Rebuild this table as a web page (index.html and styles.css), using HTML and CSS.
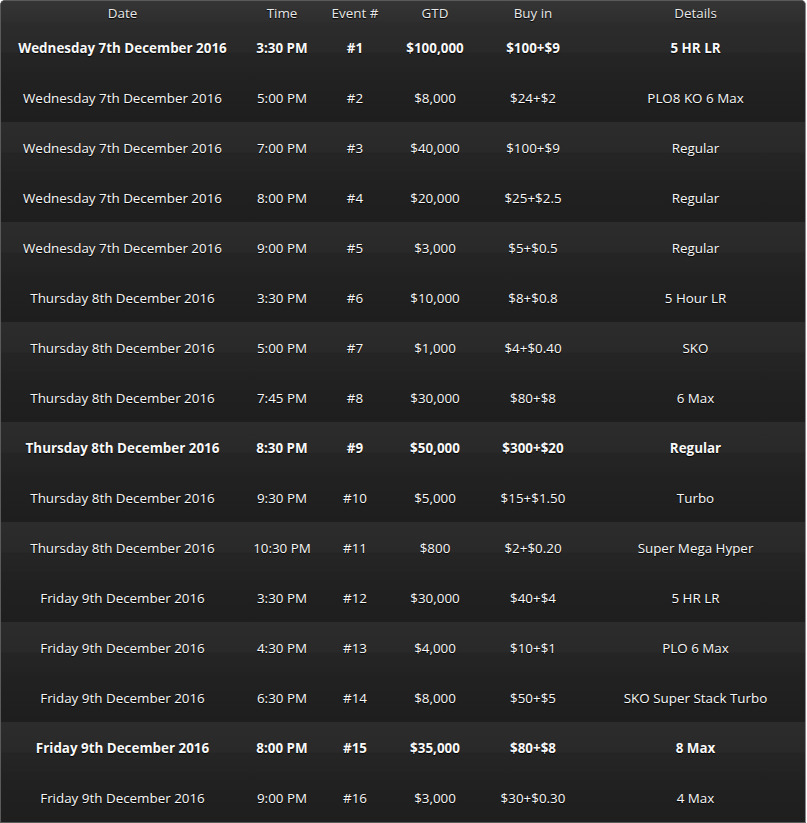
FILE: index.html
```html
<!DOCTYPE html>
<html>
<head>
<meta charset="utf-8">
<link rel="stylesheet" href="styles.css">
</head>
<body>
<div class="wrap">
<table class="sched">
<colgroup>
<col class="c-date"><col class="c-time"><col class="c-ev"><col class="c-gtd"><col class="c-buy"><col class="c-det">
</colgroup>
<thead>
<tr><th>Date</th><th>Time</th><th>Event #</th><th>GTD</th><th>Buy in</th><th>Details</th></tr>
</thead>
<tbody>
<tr class="odd hl"><td>Wednesday 7th December 2016</td><td>3:30 PM</td><td>#1</td><td>$100,000</td><td>$100+$9</td><td>5 HR LR</td></tr>
<tr class="even"><td>Wednesday 7th December 2016</td><td>5:00 PM</td><td>#2</td><td>$8,000</td><td>$24+$2</td><td>PLO8 KO 6 Max</td></tr>
<tr class="odd"><td>Wednesday 7th December 2016</td><td>7:00 PM</td><td>#3</td><td>$40,000</td><td>$100+$9</td><td>Regular</td></tr>
<tr class="even"><td>Wednesday 7th December 2016</td><td>8:00 PM</td><td>#4</td><td>$20,000</td><td>$25+$2.5</td><td>Regular</td></tr>
<tr class="odd"><td>Wednesday 7th December 2016</td><td>9:00 PM</td><td>#5</td><td>$3,000</td><td>$5+$0.5</td><td>Regular</td></tr>
<tr class="even"><td>Thursday 8th December 2016</td><td>3:30 PM</td><td>#6</td><td>$10,000</td><td>$8+$0.8</td><td>5 Hour LR</td></tr>
<tr class="odd"><td>Thursday 8th December 2016</td><td>5:00 PM</td><td>#7</td><td>$1,000</td><td>$4+$0.40</td><td>SKO</td></tr>
<tr class="even"><td>Thursday 8th December 2016</td><td>7:45 PM</td><td>#8</td><td>$30,000</td><td>$80+$8</td><td>6 Max</td></tr>
<tr class="odd hl"><td>Thursday 8th December 2016</td><td>8:30 PM</td><td>#9</td><td>$50,000</td><td>$300+$20</td><td>Regular</td></tr>
<tr class="even"><td>Thursday 8th December 2016</td><td>9:30 PM</td><td>#10</td><td>$5,000</td><td>$15+$1.50</td><td>Turbo</td></tr>
<tr class="odd"><td>Thursday 8th December 2016</td><td>10:30 PM</td><td>#11</td><td>$800</td><td>$2+$0.20</td><td>Super Mega Hyper</td></tr>
<tr class="even"><td>Friday 9th December 2016</td><td>3:30 PM</td><td>#12</td><td>$30,000</td><td>$40+$4</td><td>5 HR LR</td></tr>
<tr class="odd"><td>Friday 9th December 2016</td><td>4:30 PM</td><td>#13</td><td>$4,000</td><td>$10+$1</td><td>PLO 6 Max</td></tr>
<tr class="even"><td>Friday 9th December 2016</td><td>6:30 PM</td><td>#14</td><td>$8,000</td><td>$50+$5</td><td>SKO Super Stack Turbo</td></tr>
<tr class="odd hl"><td>Friday 9th December 2016</td><td>8:00 PM</td><td>#15</td><td>$35,000</td><td>$80+$8</td><td>8 Max</td></tr>
<tr class="even"><td>Friday 9th December 2016</td><td>9:00 PM</td><td>#16</td><td>$3,000</td><td>$30+$0.30</td><td>4 Max</td></tr>
</tbody>
</table>
</div>
</body>
</html>
```
FILE: styles.css
```css
html, body {
  margin: 0;
  padding: 0;
  background: #ffffff;
}
.wrap {
  width: 806px;
  border: 1px solid #5a5a5a;
  border-right-color: #8a8a8a;
  border-radius: 5px 5px 0 0;
  overflow: hidden;
  background: #1f1f1f;
  box-sizing: border-box;
}
.sched {
  width: 100%;
  border-collapse: collapse;
  table-layout: fixed;
  font-family: "Open Sans", "Noto Sans", sans-serif;
  font-size: 13.4px;
  color: #f8f8f8;
  text-shadow: 0 1px 1px #000;
}
.c-date { width: 243px; }
.c-time { width: 76px; }
.c-ev { width: 70px; }
.c-gtd { width: 90px; }
.c-buy { width: 106px; }
.c-det { width: auto; }
.sched th {
  height: 21px;
  padding: 2px 0 0;
  box-sizing: border-box;
  font-weight: normal;
  text-align: center;
  color: #e8e8e8;
  background: linear-gradient(#353535, #2e2e2e);
}
.sched td {
  height: 50px;
  padding: 2px 0 0;
  box-sizing: border-box;
  text-align: center;
  white-space: nowrap;
}
.sched tr.odd td {
  background: linear-gradient(#2c2c2c 0%, #292929 60%, #252525 62%, #232323 100%);
}
.sched tr.even td {
  background: linear-gradient(#222222, #1e1e1e);
}
.sched tr.hl td {
  font-weight: bold;
}
```
